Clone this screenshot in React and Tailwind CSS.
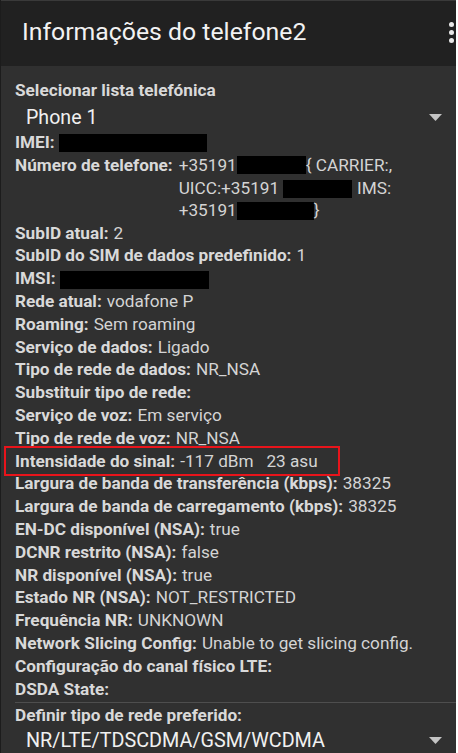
import React from "react";

const font = { fontFamily: "Roboto, 'Liberation Sans', sans-serif" };

function Row({ label, children }) {
  return (
    <div className="flex h-[22.8px] items-center whitespace-nowrap">
      <span className="font-bold text-[#d9d9d9]">{label}</span>
      {children !== undefined && <span className="ml-[5px] text-[#d4d4d4]">{children}</span>}
    </div>
  );
}

function Redact({ w }) {
  return <span className="inline-block h-[18px] bg-black align-middle" style={{ width: w }} />;
}

function Caret() {
  return (
    <svg width="13" height="7" viewBox="0 0 13 7" className="shrink-0">
      <path d="M0 0 H13 L6.5 7 Z" fill="#c4c4c4" />
    </svg>
  );
}

export default function App() {
  return (
    <div className="w-[458px] h-[753px] overflow-hidden bg-white" style={font}>
      <div className="w-[456px] h-full bg-[#303030] border-l border-[#1c1c1c]">
        {/* Toolbar */}
        <header className="h-[66px] bg-[#212121] border-t border-[#3a3a3a] flex items-center justify-between pl-[21px] pr-[2px]">
          <h1 className="text-[24.8px] text-[#f2f2f2] font-normal leading-none -mt-[2px]">
            Informações do telefone2
          </h1>
          <div className="flex flex-col gap-[3px] -mt-[2px]">
            <span className="block w-[5px] h-[5px] rounded-full bg-[#e8e8e8]" />
            <span className="block w-[5px] h-[5px] rounded-full bg-[#e8e8e8]" />
            <span className="block w-[5px] h-[5px] rounded-full bg-[#e8e8e8]" />
          </div>
        </header>

        <div className="pl-[14px] pt-[13px] text-[17.2px]">
          <div className="h-[23px] flex items-center font-bold text-[#d9d9d9]">
            Selecionar lista telefónica
          </div>
          <div className="h-[28px] flex items-center justify-between pl-[11px] pr-[14px] pt-[3px]">
            <span className="text-[19.6px] text-[#f0f0f0]">Phone 1</span>
            <Caret />
          </div>

          <div className="mt-[1px]">
            <div className="flex h-[22.8px] items-center">
              <span className="font-bold text-[#d9d9d9]">IMEI:</span>
              <span className="ml-[4px]"><Redact w={148} /></span>
            </div>
            <div className="flex text-[#d4d4d4]">
              <span className="font-bold text-[#d9d9d9] h-[22.8px] leading-[22.8px] whitespace-nowrap">Número de telefone:</span>
              <div className="ml-[6px] leading-[22.8px]">
                <div className="h-[22.8px] flex items-center whitespace-nowrap">
                  +35191<Redact w={69} />{" "}{"{"} CARRIER:,
                </div>
                <div className="h-[22.8px] flex items-center whitespace-nowrap">
                  UICC:+35191<span className="ml-[4px]"><Redact w={69} /></span><span className="ml-[5px]">IMS:</span>
                </div>
                <div className="h-[22.8px] flex items-center whitespace-nowrap">
                  +35191<Redact w={77} />{"}"}
                </div>
              </div>
            </div>
            <Row label="SubID atual:">2</Row>
            <Row label="SubID do SIM de dados predefinido:">1</Row>
            <div className="flex h-[22.8px] items-center">
              <span className="font-bold text-[#d9d9d9]">IMSI:</span>
              <span className="ml-[4px]"><Redact w={149} /></span>
            </div>
            <Row label="Rede atual:">vodafone P</Row>
            <Row label="Roaming:">Sem roaming</Row>
            <Row label="Serviço de dados:">Ligado</Row>
            <Row label="Tipo de rede de dados:">NR_NSA</Row>
            <Row label="Substituir tipo de rede:" />
            <Row label="Serviço de voz:">Em serviço</Row>
            <Row label="Tipo de rede de voz:">NR_NSA</Row>
            <div className="relative">
              <div className="absolute -left-[11px] top-[-4px] w-[336px] h-[30px] border-2 border-[#e8141b] pointer-events-none" />
              <Row label="Intensidade do sinal:">-117 dBm&nbsp;&nbsp;&nbsp;23 asu</Row>
            </div>
            <Row label="Largura de banda de transferência (kbps):">38325</Row>
            <Row label="Largura de banda de carregamento (kbps):">38325</Row>
            <Row label="EN-DC disponível (NSA):">true</Row>
            <Row label="DCNR restrito (NSA):">false</Row>
            <Row label="NR disponível (NSA):">true</Row>
            <Row label="Estado NR (NSA):">NOT_RESTRICTED</Row>
            <Row label="Frequência NR:">UNKNOWN</Row>
            <Row label="Network Slicing Config:">Unable to get slicing config.</Row>
            <Row label="Configuração do canal físico LTE:" />
            <Row label="DSDA State:" />
          </div>

          <div className="h-px bg-[#4e4e4e] mt-[1px]" />

          <div className="h-[24px] flex items-center font-bold text-[#d9d9d9] mt-[1px]">
            Definir tipo de rede preferido:
          </div>
          <div className="h-[26px] flex items-center justify-between pl-[11px] pr-[14px]">
            <span className="text-[19.8px] text-[#f0f0f0]">NR/LTE/TDSCDMA/GSM/WCDMA</span>
            <Caret />
          </div>
        </div>
      </div>
    </div>
  );
}
